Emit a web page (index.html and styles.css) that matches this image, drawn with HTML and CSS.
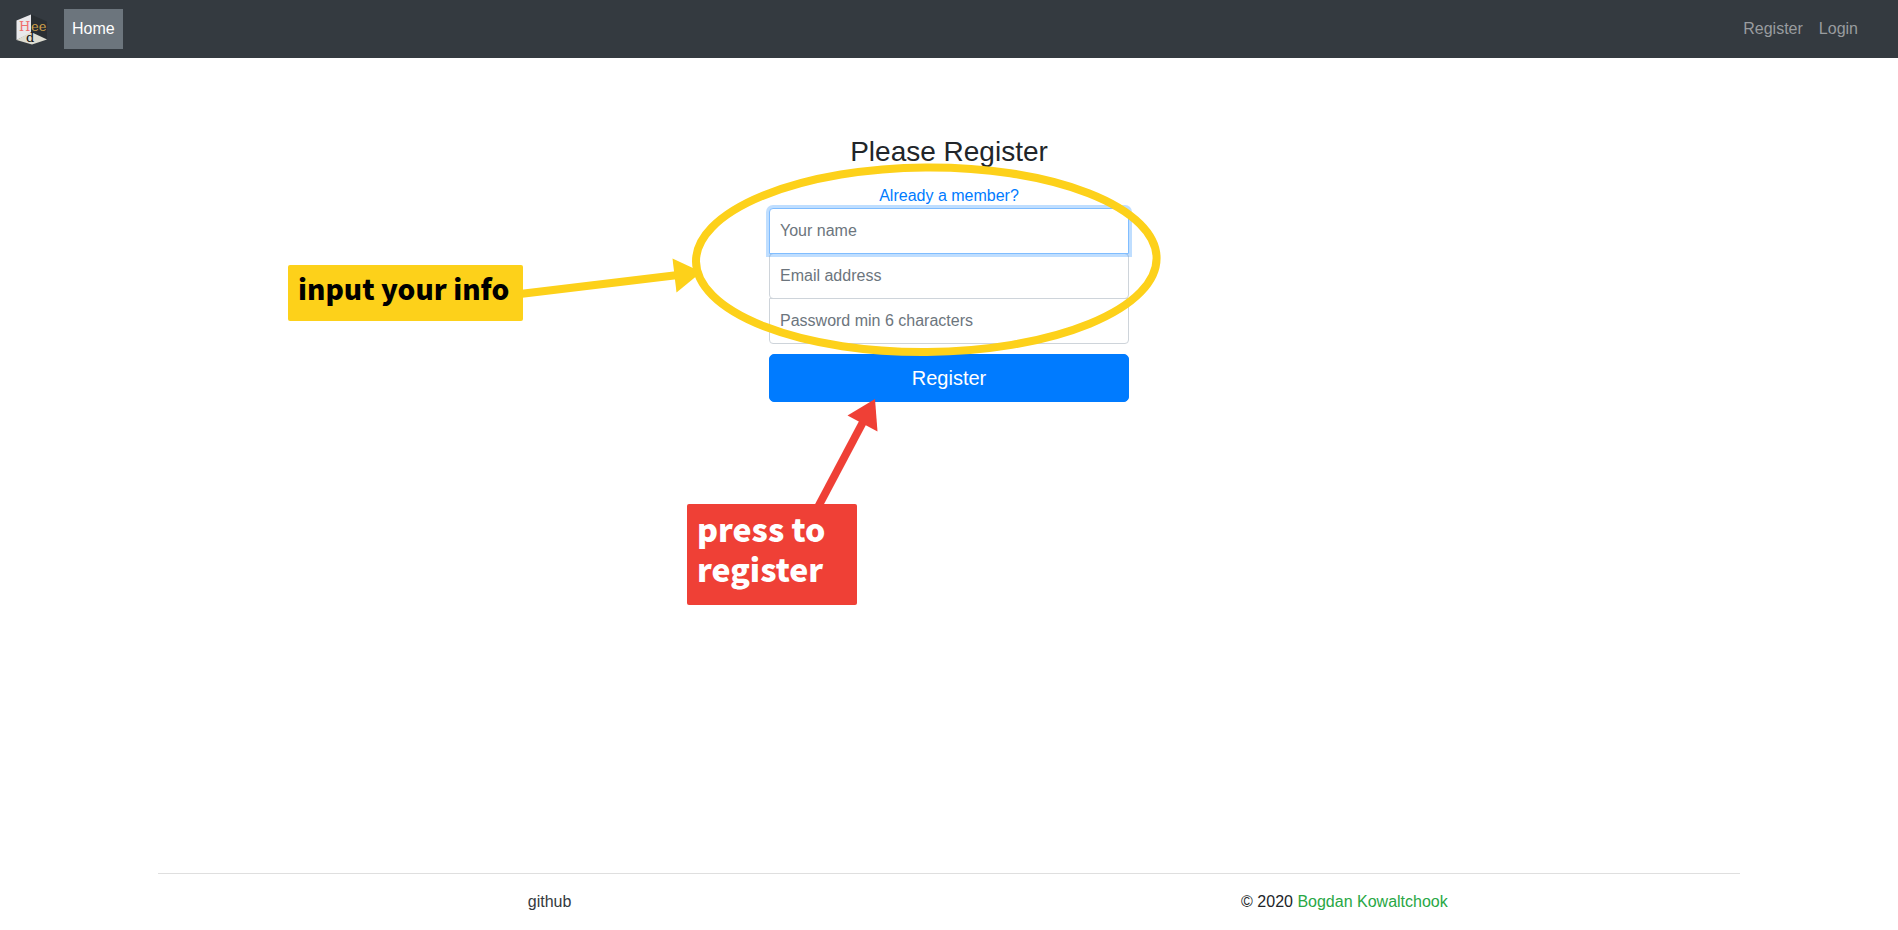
FILE: index.html
```html
<!DOCTYPE html>
<html lang="en">
<head>
<meta charset="utf-8">
<title>Register</title>
<link rel="stylesheet" href="styles.css">
</head>
<body>
<nav class="navbar">
  <a class="brand" href="#" aria-label="Heed home">
    <svg class="logo" viewBox="0 0 32 32" aria-hidden="true">
      <path fill="#e9e9ec" d="M.5 7.500 15 1.500V20L.5 27z"/>
      <path fill="#2a2f33" d="M15 1.500 31 8.500V26L15 19z"/>
      <path fill="#deddd2" d="M.5 27 15 19l16 7.500-15 5z"/>
      <g class="logo-text"><text x="3" y="17.500" fill="#f0706c">H</text><text x="15" y="17.500" fill="#cfa04a">ee</text><text x="10" y="29" fill="#111">d</text></g>
    </svg>
  </a>
  <a class="nav-link active" href="#">Home</a>
  <div class="nav-right">
    <a class="nav-link" href="#">Register</a>
    <a class="nav-link" href="#">Login</a>
  </div>
</nav>
<main class="main">
  <div class="panel">
    <form class="form">
      <h1 class="title">Please Register</h1>
      <a class="member" href="#">Already a member?</a>
      <input class="field first focused" type="text" placeholder="Your name" aria-label="Your name">
      <input class="field" type="email" placeholder="Email address" aria-label="Email address">
      <input class="field last" type="password" placeholder="Password min 6 characters" aria-label="Password">
      <button class="submit" type="submit">Register</button>
    </form>
    <svg class="marks" viewBox="288 134 880 400" aria-hidden="true">
      <ellipse cx="926.3" cy="259.700" rx="230.300" ry="92.300" transform="rotate(-.45 926.3 259.7)" fill="none" stroke="#fdd11a" stroke-width="8"/>
      <path d="M520 294 676 275.300" stroke="#fdd11a" stroke-width="8"/>
      <path d="m672.500 258.500 4 34 25-20.500z" fill="#fdd11a"/>
      <path d="M818 507 863 422" stroke="#ef4036" stroke-width="8"/>
      <path d="m847.500 415.500 30 16-2.500-32.500z" fill="#ef4036"/>
    </svg>
    <p class="note note-info">input your info</p>
    <p class="note note-press">press to<br>register</p>
  </div>
</main>
<footer class="footer">
  <div class="footer-col"><a class="github" href="#">github</a></div>
  <div class="footer-col">© 2020 <a class="author" href="#">Bogdan Kowaltchook</a></div>
</footer>
</body>
</html>
```

FILE: styles.css
```css
* { box-sizing: border-box; }
body {
  margin: 0;
  min-height: 100vh;
  display: flex;
  flex-direction: column;
  font: 16px/24px "Liberation Sans", Arial, sans-serif;
  color: #212529;
  background: #fff;
}
a { text-decoration: none; }
.navbar {
  display: flex;
  align-items: center;
  min-height: 58px;
  padding: 8px 32px 8px 16px;
  background: #343a40;
}
.brand { display: flex; margin-right: 16px; }
.logo { width: 32px; height: 32px; }
.logo-text { font: 13px "DejaVu Serif", serif; }
.nav-link { padding: 8px; color: #999c9f; }
.nav-link.active { color: #fff; background: #6c757d; }
.nav-right { display: flex; margin-left: auto; }
.main { flex: 1; padding: 76px 16px 16px; }
.panel { position: relative; max-width: 360px; margin: 0 auto; }
.form { display: flex; flex-direction: column; text-align: center; }
.title { margin: 0 0 14px; font-size: 28px; line-height: 36px; font-weight: 500; }
.member { color: #007bff; }
.field {
  width: 100%;
  height: 46px;
  margin: 0 0 -1px;
  padding: 10px;
  border: 1px solid #ced4da;
  border-radius: 4px;
  font: inherit;
  color: #495057;
  background: #fff;
}
.field::placeholder { color: #6c757d; opacity: 1; }
.field.first { border-bottom-left-radius: 0; border-bottom-right-radius: 0; }
.field.last { margin-bottom: 10px; border-top-left-radius: 0; border-top-right-radius: 0; }
.field.focused {
  position: relative;
  z-index: 1;
  border-color: #80bdff;
  outline: 0;
  box-shadow: 0 0 0 3px rgba(0, 123, 255, .25);
}
.submit {
  padding: 8px 16px;
  border: 1px solid #007bff;
  border-radius: 5px;
  font: inherit;
  font-size: 20px;
  line-height: 30px;
  color: #fff;
  background: #007bff;
}
.marks {
  position: absolute;
  z-index: 2;
  left: -481px;
  top: 0;
  width: 880px;
  height: 400px;
  pointer-events: none;
}
.note {
  position: absolute;
  z-index: 3;
  margin: 0;
  border-radius: 2px;
  font-family: "Noto Sans CJK JP", sans-serif;
  font-weight: 900;
  white-space: nowrap;
}
.note-info {
  left: -481px;
  top: 131px;
  width: 235px;
  padding: 3px 10px 13px;
  font-size: 28px;
  line-height: 40px;
  color: #000;
  background: #fdd11a;
}
.note-press {
  left: -82px;
  top: 370px;
  width: 170px;
  padding: 4px 10px 17px;
  font-size: 32px;
  line-height: 40px;
  color: #fff;
  background: #ef4036;
}
.footer {
  display: flex;
  width: 83.3333%;
  margin: 0 auto;
  padding: 16px 0;
  border-top: 1px solid #dfdfdf;
}
.footer-col { flex: 1; text-align: center; }
.github { margin-right: 8px; color: #343a40; }
.author { color: #28a745; }
```
